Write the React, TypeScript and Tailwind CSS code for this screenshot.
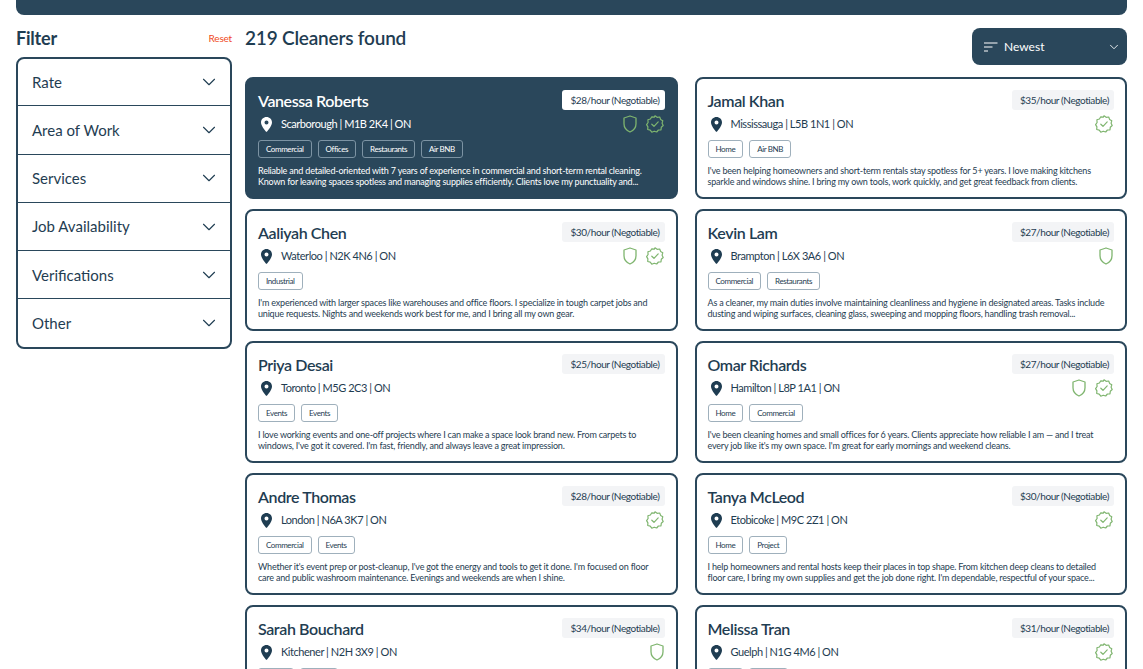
import { ChevronDown } from "lucide-react";

type Cleaner = {
  name: string;
  rate: number;
  place: string;
  tags: string[];
  bio: string[];
  shield?: boolean;
  badge?: boolean;
  active?: boolean;
};

const filters = ["Rate", "Area of Work", "Services", "Job Availability", "Verifications", "Other"];

const left: Cleaner[] = [
  {
    name: "Vanessa Roberts",
    rate: 28,
    place: "Scarborough | M1B 2K4 | ON",
    tags: ["Commercial", "Offices", "Restaurants", "Air BNB"],
    bio: [
      "Reliable and detailed-oriented with 7 years of experience in commercial and short-term rental cleaning.",
      "Known for leaving spaces spotless and managing supplies efficiently. Clients love my punctuality and...",
    ],
    shield: true,
    badge: true,
    active: true,
  },
  {
    name: "Aaliyah Chen",
    rate: 30,
    place: "Waterloo | N2K 4N6 | ON",
    tags: ["Industrial"],
    bio: [
      "I'm experienced with larger spaces like warehouses and office floors. I specialize in tough carpet jobs and",
      "unique requests. Nights and weekends work best for me, and I bring all my own gear.",
    ],
    shield: true,
    badge: true,
  },
  {
    name: "Priya Desai",
    rate: 25,
    place: "Toronto | M5G 2C3 | ON",
    tags: ["Events", "Events"],
    bio: [
      "I love working events and one-off projects where I can make a space look brand new. From carpets to",
      "windows, I've got it covered. I'm fast, friendly, and always leave a great impression.",
    ],
  },
  {
    name: "Andre Thomas",
    rate: 28,
    place: "London | N6A 3K7 | ON",
    tags: ["Commercial", "Events"],
    bio: [
      "Whether it's event prep or post-cleanup, I've got the energy and tools to get it done. I'm focused on floor",
      "care and public washroom maintenance. Evenings and weekends are when I shine.",
    ],
    badge: true,
  },
  {
    name: "Sarah Bouchard",
    rate: 34,
    place: "Kitchener | N2H 3X9 | ON",
    tags: ["Home", "Offices"],
    bio: [],
    shield: true,
  },
];

const right: Cleaner[] = [
  {
    name: "Jamal Khan",
    rate: 35,
    place: "Mississauga | L5B 1N1 | ON",
    tags: ["Home", "Air BNB"],
    bio: [
      "I've been helping homeowners and short-term rentals stay spotless for 5+ years. I love making kitchens",
      "sparkle and windows shine. I bring my own tools, work quickly, and get great feedback from clients.",
    ],
    badge: true,
  },
  {
    name: "Kevin Lam",
    rate: 27,
    place: "Brampton | L6X 3A6 | ON",
    tags: ["Commercial", "Restaurants"],
    bio: [
      "As a cleaner, my main duties involve maintaining cleanliness and hygiene in designated areas. Tasks include",
      "dusting and wiping surfaces, cleaning glass, sweeping and mopping floors, handling trash removal...",
    ],
    shield: true,
  },
  {
    name: "Omar Richards",
    rate: 27,
    place: "Hamilton | L8P 1A1 | ON",
    tags: ["Home", "Commercial"],
    bio: [
      "I've been cleaning homes and small offices for 6 years. Clients appreciate how reliable I am \u2014 and I treat",
      "every job like it's my own space. I'm great for early mornings and weekend cleans.",
    ],
    shield: true,
    badge: true,
  },
  {
    name: "Tanya McLeod",
    rate: 30,
    place: "Etobicoke | M9C 2Z1 | ON",
    tags: ["Home", "Project"],
    bio: [
      "I help homeowners and rental hosts keep their places in top shape. From kitchen deep cleans to detailed",
      "floor care, I bring my own supplies and get the job done right. I'm dependable, respectful of your space...",
    ],
    badge: true,
  },
  {
    name: "Melissa Tran",
    rate: 31,
    place: "Guelph | N1G 4M6 | ON",
    tags: ["Home", "Offices"],
    bio: [],
    badge: true,
  },
];

function PinIcon({ className }: { className: string }) {
  return (
    <svg width="11" height="15" viewBox="0 0 11 15" className={className}>
      <path
        fill="currentColor"
        fillRule="evenodd"
        d="M5.5 0C2.5 0 0 2.4 0 5.4 0 9.2 5.5 15 5.5 15S11 9.2 11 5.4C11 2.4 8.5 0 5.5 0ZM5.5 3.5A2 2 0 1 1 5.5 7.5 2 2 0 0 1 5.5 3.5Z"
      />
    </svg>
  );
}

function ShieldIcon() {
  return (
    <svg width="14" height="18" viewBox="0 0 14 18" fill="none" stroke="#7fb56f" strokeWidth="1.3">
      <path d="M7 1 13 3V8.8C13 12.8 10.4 15.6 7 17 3.6 15.6 1 12.8 1 8.8V3Z" strokeLinejoin="round" />
    </svg>
  );
}

function BadgeIcon() {
  return (
    <svg width="18" height="18" viewBox="0 0 18 18" fill="none" stroke="#7fb56f" strokeWidth="1.2">
      <path
        d="M9 .8 11.1 2.3 13.7 2 14.6 4.4 16.8 5.7 16.1 8.2 17.2 10.5 15.3 12.2 15 14.8 12.4 15 10.7 17 8.2 16.2 5.8 17.2 4.2 15.1 1.7 14.5 1.9 11.9.6 9.6 2.1 7.5 1.9 4.8 4.4 4 5.8 1.8 8.3 2.1Z"
        strokeLinejoin="round"
      />
      <path d="M5.8 9.2 8 11.3 12.2 6.9" strokeLinecap="round" strokeLinejoin="round" />
    </svg>
  );
}

function SortIcon() {
  return (
    <svg width="14" height="10" viewBox="0 0 14 10" fill="none" stroke="#ffffff" strokeWidth="1.2">
      <path d="M0 1h13.5M0 5h8.5M0 9h4" />
    </svg>
  );
}

function CleanerCard({ c }: { c: Cleaner }) {
  const dark = c.active;
  return (
    <div
      className={`h-[122px] shrink-0 rounded-lg border-2 border-[#2a475b] px-[11px] pt-[10px] ${
        dark ? "bg-[#2a475b] text-white" : "bg-white text-[#1f3d52]"
      }`}
    >
      <div className="flex items-start justify-between">
        <div className="text-[16px] leading-[24px] font-semibold tracking-[-0.4px]">{c.name}</div>
        <div
          className={`mt-[1px] flex h-5 items-center rounded-[3px] pl-2 pr-[5px] text-[10px] tracking-[-0.4px] ${
            dark ? "bg-white text-[#1f3d52]" : "bg-[#f3f4f6] text-[#1f3d52]"
          }`}
        >
          ${c.rate}/hour (Negotiable)
        </div>
      </div>
      <div className="mt-[1px] flex h-5 items-center justify-between">
        <div className="flex items-center">
          <PinIcon className={`ml-[3px] ${dark ? "text-white" : "text-[#1f3d52]"}`} />
          <span className="ml-[9px] text-[11px] tracking-[-0.45px]">{c.place}</span>
        </div>
        <div className="mr-[1px] flex items-center gap-[9px]">
          {c.shield && <ShieldIcon />}
          {c.badge && <BadgeIcon />}
        </div>
      </div>
      <div className="mt-[6px] flex gap-[6px]">
        {c.tags.map((t, i) => (
          <span
            key={i}
            className={`flex h-[18px] items-center rounded-[3px] border px-[7px] text-[8px] tracking-[-0.4px] ${
              dark ? "border-[#7c93a3] text-white" : "border-[#9fb0bc] text-[#1f3d52]"
            }`}
          >
            {t}
          </span>
        ))}
      </div>
      <div className="mt-[7px] text-[9px] leading-[11px] tracking-[-0.2px] whitespace-nowrap">
        {c.bio.map((line, i) => (
          <div key={i}>{line}</div>
        ))}
      </div>
    </div>
  );
}

export default function App() {
  return (
    <div className="h-screen overflow-hidden bg-white px-4 font-['Lato','Liberation_Sans',sans-serif] text-[#1f3d52]">
      <div className="h-[15px] rounded-b-lg bg-[#2a475b]" />
      <div className="mt-[9px] flex gap-[13px]">
        <aside className="w-[216px] shrink-0">
          <div className="flex h-7 items-center justify-between">
            <span className="text-[18px] font-bold tracking-[-0.2px]">Filter</span>
            <span className="text-[10px] tracking-[-0.2px] text-[#f04a23]">Reset</span>
          </div>
          <div className="mt-[5px] rounded-lg border-2 border-[#2a475b]">
            {filters.map((f, i) => (
              <div
                key={f}
                className={`flex items-center justify-between pl-[14px] pr-[10px] ${
                  i > 0 ? "h-[48.3px] border-t border-[#2a475b]" : "h-[46.3px]"
                }`}
              >
                <span className="text-[15px]">{f}</span>
                <ChevronDown size={22} strokeWidth={1.2} />
              </div>
            ))}
          </div>
        </aside>
        <main className="min-w-0 flex-1">
          <div className="flex items-start justify-between">
            <h1 className="flex h-7 items-center text-[19px] font-semibold tracking-[-0.2px]">219 Cleaners found</h1>
            <div className="mt-[4px] flex h-[37px] w-[155px] items-center rounded-lg bg-[#2a475b] pl-3 pr-[6px] text-white">
              <SortIcon />
              <span className="ml-[6px] text-[12px]">Newest</span>
              <ChevronDown size={14} strokeWidth={1.5} className="ml-auto" />
            </div>
          </div>
          <div className="mt-[12px] grid grid-cols-2 gap-x-[17px]">
            <div className="flex flex-col gap-[10px]">
              {left.map((c) => (
                <CleanerCard key={c.name} c={c} />
              ))}
            </div>
            <div className="flex flex-col gap-[10px]">
              {right.map((c) => (
                <CleanerCard key={c.name} c={c} />
              ))}
            </div>
          </div>
        </main>
      </div>
    </div>
  );
}
